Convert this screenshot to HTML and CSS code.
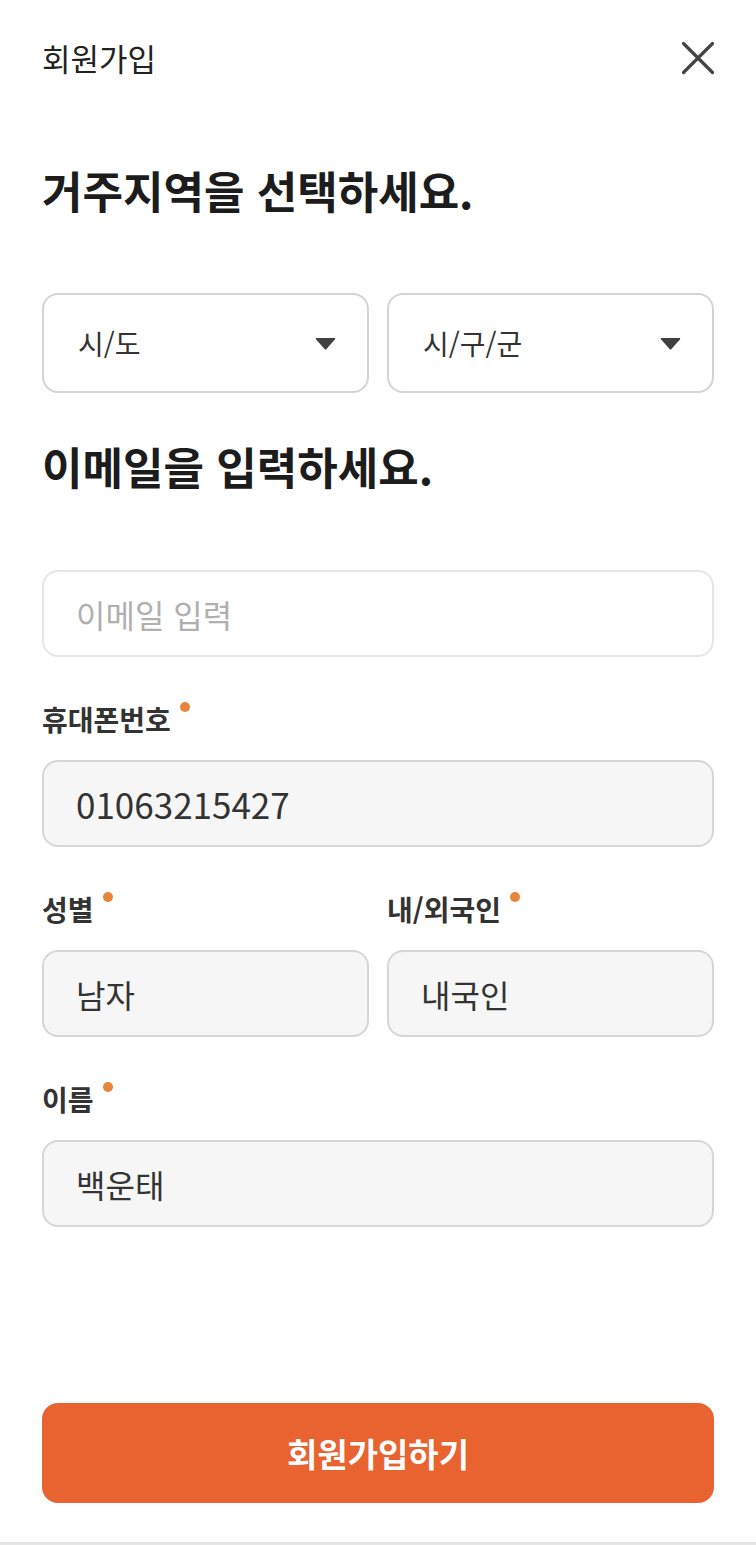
FILE: index.html
```html
<!DOCTYPE html>
<html lang="ko">
<head>
<meta charset="utf-8">
<title>회원가입</title>
<link rel="stylesheet" href="styles.css">
</head>
<body>
<div class="page">
  <header class="header">
    <span class="header-title">회원가입</span>
    <button class="close" aria-label="닫기">
      <svg width="34" height="34" viewBox="0 0 34 34"><path d="M2.5 2.5 L31.5 31.5 M31.5 2.5 L2.5 31.5" stroke="#444" stroke-width="3.2" stroke-linecap="round" fill="none"/></svg>
    </button>
  </header>

  <h2 class="section-title first">거주지역을 선택하세요.</h2>
  <div class="row selects">
    <div class="select">
      <span>시/도</span>
      <svg class="caret" width="21" height="13" viewBox="0 0 21 13"><path d="M1.5 1 H19.5 Q20.8 1 20 2.2 L11.5 12 Q10.5 13 9.5 12 L1 2.2 Q0.2 1 1.5 1 Z" fill="#404040"/></svg>
    </div>
    <div class="select">
      <span>시/구/군</span>
      <svg class="caret" width="21" height="13" viewBox="0 0 21 13"><path d="M1.5 1 H19.5 Q20.8 1 20 2.2 L11.5 12 Q10.5 13 9.5 12 L1 2.2 Q0.2 1 1.5 1 Z" fill="#404040"/></svg>
    </div>
  </div>

  <h2 class="section-title second">이메일을 입력하세요.</h2>
  <div class="field email">
    <span class="placeholder">이메일 입력</span>
  </div>

  <div class="group">
    <div class="label">휴대폰번호<i class="dot"></i></div>
    <div class="field filled"><span class="value digits">01063215427</span></div>
  </div>

  <div class="row group">
    <div class="col">
      <div class="label">성별<i class="dot"></i></div>
      <div class="field filled"><span class="value">남자</span></div>
    </div>
    <div class="col">
      <div class="label">내/외국인<i class="dot"></i></div>
      <div class="field filled"><span class="value">내국인</span></div>
    </div>
  </div>

  <div class="group">
    <div class="label">이름<i class="dot"></i></div>
    <div class="field filled"><span class="value">백운태</span></div>
  </div>

  <button class="submit">회원가입하기</button>
</div>
<div class="bottom-line"></div>
</body>
</html>
```

FILE: styles.css
```css
html, body {
  margin: 0;
  padding: 0;
  background: #fff;
}
body {
  font-family: "Noto Sans CJK KR", "Noto Sans", sans-serif;
  color: #222;
}
.page {
  padding: 0 42px 0 42px;
  height: 1542px;
  box-sizing: border-box;
  display: flex;
  flex-direction: column;
}
.header {
  height: 116px;
  display: flex;
  align-items: center;
  justify-content: space-between;
}
.header-title {
  font-size: 31px;
  color: #222;
  line-height: 36px;
}
.close {
  border: 0;
  background: none;
  padding: 0;
  width: 34px;
  height: 34px;
  margin-right: -1px;
  display: flex;
}
.section-title {
  margin: 0;
  font-size: 44px;
  font-weight: 700;
  line-height: 50px;
  letter-spacing: 0;
  color: #1c1c1c;
}
.section-title.first {
  margin-top: 49px;
}
.section-title.second {
  margin-top: 48px;
}
.row {
  display: grid;
  grid-template-columns: 1fr 1fr;
  column-gap: 18px;
}
.selects {
  margin-top: 78px;
}
.select {
  height: 100px;
  box-sizing: border-box;
  border: 2px solid #d4d4d4;
  border-radius: 16px;
  display: flex;
  align-items: center;
  justify-content: space-between;
  padding: 0 31px 0 34px;
  font-size: 28px;
  color: #333;
}
.caret {
  display: block;
  margin-top: 1px;
}
.field {
  height: 87px;
  box-sizing: border-box;
  border: 2px solid #d6d6d6;
  border-radius: 16px;
  display: flex;
  align-items: center;
  padding: 0 32px;
  font-size: 32px;
}
.field.email {
  margin-top: 79px;
  border-color: #e6e6e6;
  background: #fff;
}
.placeholder {
  color: #b0b0b0;
}
.field.filled {
  background: #f6f6f6;
}
.value {
  color: #333;
}
.value.digits {
  font-size: 35px;
}
.group {
  margin-top: 44px;
}
.label {
  font-size: 28px;
  font-weight: 700;
  color: #333;
  line-height: 36px;
  margin-bottom: 23px;
  display: flex;
  align-items: flex-start;
}
.dot {
  display: inline-block;
  width: 10px;
  height: 10px;
  border-radius: 50%;
  background: #e8853a;
  margin-left: 9px;
  margin-top: 1px;
}
.submit {
  margin-top: auto;
  margin-bottom: 39px;
  height: 100px;
  border: 0;
  border-radius: 16px;
  background: #e8632f;
  color: #fff;
  font-family: "Noto Sans CJK KR", "Noto Sans", sans-serif;
  font-size: 33px;
  font-weight: 700;
  width: 100%;
}
.bottom-line {
  height: 3px;
  background: #e6e6e6;
}
```
